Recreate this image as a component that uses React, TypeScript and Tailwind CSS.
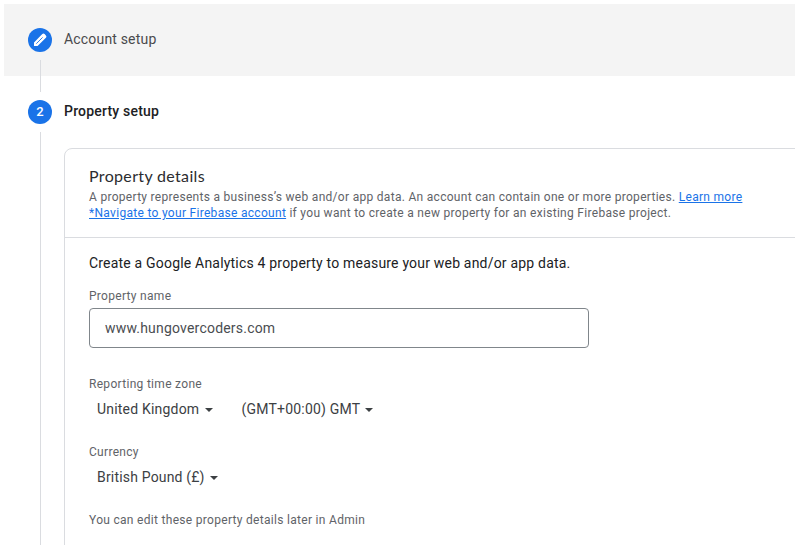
const Caret = () => (
  <svg width="8" height="4" viewBox="0 0 8 4" className="mt-[2px] shrink-0"><path d="M0 0h8L4 4z" fill="#3c4043" /></svg>
);
export default function App() {
  return (
    <div className="flex h-[545px] w-[795px] flex-col overflow-hidden bg-white pl-1 pt-1 font-['Roboto',sans-serif] text-[#3c4043]">
      <header className="flex h-[72px] shrink-0 items-center bg-[#f4f4f4] pl-6">
        <span className="grid size-6 place-items-center rounded-full bg-[#1a73e8]">
          <svg width="16" height="16" viewBox="0 0 16 16" fill="none"><path d="M2 14v-3.6L10.3 2.1a1.6 1.6 0 0 1 2.3 0l1.3 1.3a1.6 1.6 0 0 1 0 2.3L5.6 14z" fill="#fff" /><path d="M4.3 11.7 10.6 5.4" stroke="#1a73e8" strokeWidth="0.9" /></svg>
        </span>
        <span className="mb-[2px] ml-3 text-sm tracking-[0.18px] text-[#4a4a4d]">Account setup</span>
      </header>
      <div className="flex h-[469px]">
        <div className="ml-6 flex w-6 shrink-0 flex-col items-center">
          <div className="-mt-4 h-8 w-px shrink-0 bg-[#dadce0]" />
          <span className="mt-2 grid size-6 shrink-0 place-items-center rounded-full bg-[#1a73e8] text-[13px] font-medium text-white">2</span>
          <div className="mt-2 w-px grow bg-[#dadce0]" />
        </div>
        <main className="ml-3 w-[731px] shrink-0">
          <h2 className="mt-[25px] text-sm font-medium leading-5 tracking-[0.2px] text-[#202124]">Property setup</h2>
          <section className="mt-[27px] h-[420px] w-[760px] rounded-t-lg border border-[#dadce0]">
            <div className="h-[89px] border-b border-[#dadce0] pl-6 pt-[15px]">
              <h3 className="mb-px font-['Lato',sans-serif] text-base leading-6 tracking-[0.34px] text-[#2b2c2f]">Property details</h3>
              <p className="text-xs leading-4 tracking-[0.293px] text-[#5f6368]">A property represents a business’s web and/or app data. An account can contain one or more properties. <a className="text-[#1a73e8] underline">Learn more</a></p>
              <p className="text-xs leading-4 tracking-[0.3px] text-[#5f6368]"><a className="text-[#1a73e8] underline">*Navigate to your Firebase account</a> if you want to create a new property for an existing Firebase project.</p>
            </div>
            <div className="pl-6 pt-[15px]">
              <p className="text-sm leading-5 tracking-[0.195px] text-[#202124]">Create a Google Analytics 4 property to measure your web and/or app data.</p>
              <label className="mt-[15px] block text-xs leading-4 tracking-[0.3px] text-[#5f6368]">Property name</label>
              <div className="mt-1 flex h-10 w-[500px] items-center rounded border border-[#80868b] pl-[15px] text-sm tracking-[0.2px] text-[#4a4d51]">www.hungovercoders.com</div>
              <p className="mt-7 text-xs leading-4 tracking-[0.3px] text-[#5f6368]">Reporting time zone</p>
              <div className="mt-[7px] flex pl-2 text-sm leading-5 tracking-[0.2px]">
                <span className="flex w-[144.5px] items-center gap-[5.5px]">United Kingdom<Caret /></span>
                <span className="flex items-center gap-[5px]">(GMT+00:00) GMT<Caret /></span>
              </div>
              <p className="mt-[25px] text-xs leading-4 tracking-[0.3px] text-[#5f6368]">Currency</p>
              <div className="mt-[7px] flex items-center gap-[5px] pl-2 text-sm leading-5 tracking-[0.18px]">British Pound (£)<Caret /></div>
              <p className="mt-[25px] text-xs leading-4 tracking-[0.3px] text-[#5f6368]">You can edit these property details later in Admin</p>
            </div>
          </section>
        </main>
      </div>
    </div>
  );
}
